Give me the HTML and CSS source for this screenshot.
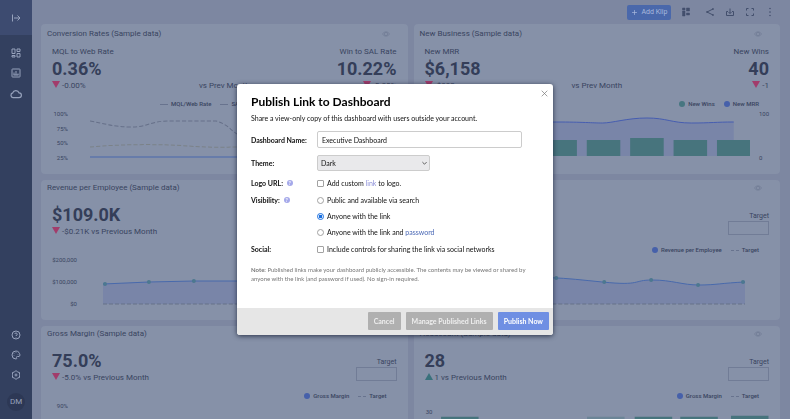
FILE: index.html
```
<!DOCTYPE html>
<html lang="en">
<head>
  <meta charset="UTF-8" />
  <meta name="viewport" content="width=device-width, initial-scale=1.0"/>
  <title>Executive Dashboard</title>
  <link rel="stylesheet" href="styles.css">
</head>
<body>
  <div class="app">
    <nav class="sidebar">
      <button class="expand" aria-label="Expand menu">
        <svg class="icon" viewBox="0 0 20 20"><path d="M3 3v14M6 10h12M13 5l5 5-5 5"/></svg>
      </button>
      <div class="nav-top">
        <a href="#" aria-label="Dashboards"><svg class="icon" viewBox="0 0 20 20"><path d="M2 2h6v9H2zM12 2h6v5h-6zM2 15h6v3H2zM12 11h6v7h-6z"/></svg></a>
        <a href="#" aria-label="Reports"><svg class="icon" viewBox="0 0 20 20"><rect x="2" y="2" width="16" height="16" rx="1"/><path d="M6 14v-5M10 14V6M14 14v-3M5 14h10"/></svg></a>
        <a href="#" aria-label="Data sources"><svg class="icon cloud" viewBox="0 0 20 20"><path d="M5 16a4 4 0 0 1-.5-7.800A5.500 5.500 0 0 1 15 8a4 4 0 0 1 0 8z"/></svg></a>
      </div>
      <div class="nav-bottom">
        <a href="#" aria-label="Help"><svg class="icon" viewBox="0 0 20 20"><circle cx="10" cy="10" r="8"/><path d="M7.500 8a2.500 2.500 0 1 1 2.500 3v1M10 14v1"/></svg></a>
        <a href="#" aria-label="Appearance"><svg class="icon" viewBox="0 0 20 20"><path d="M10 2a8 8 0 1 0 0 16c2 0 1.500-2 1-3s0-2 2-2h3c3-1 2-5 0-8a8 8 0 0 0-6-3z"/><path d="M6 11v1M6 7v1M10 5v1M14 8v1"/></svg></a>
        <a href="#" aria-label="Settings"><svg class="icon" viewBox="0 0 20 20"><path d="M10 1l3 3 4 1v4l1 1-1 1v4l-4 1-3 3-3-3-4-1v-4l-1-1 1-1V5l4-1z"/><circle cx="10" cy="10" r="2"/></svg></a>
        <button class="avatar">DM</button>
      </div>
    </nav>

    <main class="main">
      <div class="toolbar">
        <button class="add"><svg class="icon" viewBox="0 0 20 20"><path d="M10 3v14M3 10h14"/></svg>Add Klip</button>
        <button class="layout" aria-label="Layout"><svg class="icon solid" viewBox="0 0 20 20"><path d="M3 2h5v4H3zM3 8h5v10H3zM11 2h6v6h-6zM11 12h6v4h-6z"/></svg></button>
        <button aria-label="Share"><svg class="icon" viewBox="0 0 20 20"><path d="M16 4L4 10l12 6"/><circle cx="16" cy="4" r="1"/><circle cx="4" cy="10" r="1"/><circle cx="16" cy="16" r="1"/></svg></button>
        <button aria-label="Download"><svg class="icon" viewBox="0 0 20 20"><path d="M6 9H3v8h14V9h-3M10 3v10M7 10l3 3 3-3"/></svg></button>
        <button aria-label="Full screen"><svg class="icon" viewBox="0 0 20 20"><path d="M7 3H3v4M13 3h4v4M7 17H3v-4M13 17h4v-4"/></svg></button>
        <button aria-label="More"><svg class="icon solid" viewBox="0 0 20 20"><circle cx="10" cy="3" r="1"/><circle cx="10" cy="10" r="1"/><circle cx="10" cy="17" r="1"/></svg></button>
      </div>

      <div class="grid">
        <section class="card">
          <header><h2>Conversion Rates (Sample data)</h2><svg class="eye" viewBox="0 0 20 20"><path d="M1 10q9-11 18 0q-9 11-18 0"/><circle cx="10" cy="10" r="4"/></svg></header>
          <div class="kpis">
            <div class="kpi">
              <h3>MQL to Web Rate</h3>
              <div class="value">0.36%</div>
              <div class="delta"><span class="down"></span>-0.00%</div>
            </div>
            <div class="delta">vs Prev Month</div>
            <div class="kpi right">
              <h3>Win to SAL Rate</h3>
              <div class="value">10.22%</div>
              <div class="delta"><span class="down"></span>-0.30%</div>
            </div>
          </div>
          <div class="legend start">
            <span><i class="line"></i>MQL/Web Rate</span>
            <span><i class="line"></i>SAL Rate</span>
          </div>
          <div class="chart">
            <div class="axis percent"><span>100%</span><span>75%</span><span>50%</span><span>25%</span></div>
            <svg class="plot" viewBox="0 0 296 54" preserveAspectRatio="none">
              <path class="dash" d="M0 12C15 15 25 18 40 18S60 12 75 12H122C135 16 135 22 146 27"/>
              <path class="dash gold" d="M0 38C30 35 70 35 95 37S130 38 146 38"/>
              <path class="blue" d="M0 48H296"/>
            </svg>
          </div>
        </section>

        <section class="card">
          <header><h2>New Business (Sample data)</h2><svg class="eye" viewBox="0 0 20 20"><path d="M1 10q9-11 18 0q-9 11-18 0"/><circle cx="10" cy="10" r="4"/></svg></header>
          <div class="kpis">
            <div class="kpi">
              <h3>New MRR</h3>
              <div class="value">$6,158</div>
              <div class="delta"><span class="down"></span>-$882</div>
            </div>
            <div class="delta">vs Prev Month</div>
            <div class="kpi right">
              <h3>New Wins</h3>
              <div class="value">40</div>
              <div class="delta"><span class="down"></span>-1</div>
            </div>
          </div>
          <div class="legend">
            <span><i class="dot green"></i>New Wins</span>
            <span><i class="dot"></i>New MRR</span>
          </div>
          <div class="chart">
            <svg class="plot" viewBox="0 0 330 54" preserveAspectRatio="none">
              <path class="area" d="M20 14L133 13C160 13 170 14 180 14S205 9 225 9S250 14 270 14S295 13 313 13V47H20z"/>
              <path class="violet" d="M20 14L133 13C160 13 170 14 180 14S205 9 225 9S250 14 270 14S295 13 313 13"/>
              <path class="bars" d="M120 31h34v16h-34zM164 31h34v16h-34zM208 29h34v18h-34zM252 31h34v16h-34zM296 31h34v16h-34z"/>
            </svg>
            <div class="axis after"><span>100</span><span>0</span></div>
          </div>
        </section>

        <section class="card wide">
          <header><h2>Revenue per Employee (Sample data)</h2><svg class="eye" viewBox="0 0 20 20"><path d="M1 10q9-11 18 0q-9 11-18 0"/><circle cx="10" cy="10" r="4"/></svg></header>
          <div class="kpis">
            <div class="kpi">
              <div class="value">$109.0K</div>
              <div class="delta"><span class="down"></span>-$0.21K vs Previous Month</div>
            </div>
            <div class="target"><label for="t1">Target</label><input id="t1" type="text"></div>
          </div>
          <div class="legend">
            <span><i class="dot"></i>Revenue per Employee</span>
            <span><i class="line short"></i>Target</span>
          </div>
          <div class="chart">
            <div class="axis money"><span>$200,000</span><span>$100,000</span><span>$0</span></div>
            <svg class="plot" viewBox="0 0 643 50" preserveAspectRatio="none">
              <path class="area" d="M0 27L46 25L91 24H400C440 18 460 21 500 25S530 23 550 23S580 28 597 28S620 26 643 25V47H0z"/>
              <path class="blue" d="M0 27L46 25L91 24H400C440 18 460 21 500 25S530 23 550 23S580 28 597 28S620 26 643 25"/>
              <path class="dash" d="M0 47H643"/>
              <g class="points"><circle cx="2" cy="27" r="2"/><circle cx="46" cy="25" r="2"/><circle cx="91" cy="24" r="2"/><circle cx="454" cy="21" r="2"/><circle cx="502" cy="25" r="2"/><circle cx="549" cy="23" r="2"/><circle cx="596" cy="28" r="2"/><circle cx="641" cy="25" r="2"/></g>
            </svg>
          </div>
        </section>

        <section class="card">
          <header><h2>Gross Margin (Sample data)</h2></header>
          <div class="kpis">
            <div class="kpi">
              <div class="value">75.0%</div>
              <div class="delta"><span class="down"></span>-5.0% vs Previous Month</div>
            </div>
            <div class="target"><label for="t2">Target</label><input id="t2" type="text"></div>
          </div>
          <div class="legend">
            <span><i class="dot"></i>Gross Margin</span>
            <span><i class="line short"></i>Target</span>
          </div>
          <div class="chart">
            <div class="axis percent"><span>90%</span></div>
          </div>
        </section>

        <section class="card">
          <header><h2>Headcount (Sample data)</h2><svg class="eye" viewBox="0 0 20 20"><path d="M1 10q9-11 18 0q-9 11-18 0"/><circle cx="10" cy="10" r="4"/></svg></header>
          <div class="kpis">
            <div class="kpi">
              <div class="value">28</div>
              <div class="delta"><span class="up"></span>1 vs Previous Month</div>
            </div>
            <div class="target"><label for="t3">Target</label><input id="t3" type="text"></div>
          </div>
          <div class="legend">
            <span><i class="dot"></i>Gross Margin</span>
            <span><i class="line short"></i>Target</span>
          </div>
          <div class="chart low">
            <div class="axis count"><span>30</span></div>
            <svg class="plot" viewBox="0 0 328 50" preserveAspectRatio="none">
              <path class="bars" d="M4 9h37v41H4zM195 9h37v41h-37zM240 9h37v41h-37zM290 8h37v42h-37z"/>
              <path class="bars faint" d="M148 9h37v41h-37z"/>
            </svg>
          </div>
        </section>
      </div>
    </main>
  </div>

  <div class="overlay">
    <form class="modal" role="dialog" aria-labelledby="modal-title">
      <button type="button" class="close" aria-label="Close"><svg viewBox="0 0 10 10"><path d="M1 1l8 8M9 1l-8 8"/></svg></button>
      <div class="modal-body">
        <h1 id="modal-title">Publish Link to Dashboard</h1>
        <p class="intro">Share a view-only copy of this dashboard with users outside your account.</p>

        <div class="fields">
          <label class="name" for="dashboard-name">Dashboard Name:</label>
          <input class="text" id="dashboard-name" type="text" value="Executive Dashboard">

          <label class="name" for="theme">Theme:</label>
          <div class="select">
            <select id="theme"><option>Dark</option><option>Light</option></select>
            <svg viewBox="0 0 10 10"><path d="M2 3l3 3 3-3"/></svg>
          </div>

          <div class="name">Logo URL: <span class="help">?</span></div>
          <label class="option"><input type="checkbox"><span>Add custom <a class="pale" href="#">link</a> to logo.</span></label>

          <div class="name">Visibility: <span class="help">?</span></div>
          <div class="options">
            <label class="option"><input type="radio" name="visibility"><span>Public and available via search</span></label>
            <label class="option"><input type="radio" name="visibility" checked><span>Anyone with the link</span></label>
            <label class="option"><input type="radio" name="visibility"><span>Anyone with the link and <a href="#">password</a></span></label>
          </div>

          <div class="name">Social:</div>
          <label class="option"><input type="checkbox"><span>Include controls for sharing the link via social networks</span></label>
        </div>

        <p class="note"><b>Note:</b> Published links make your dashboard publicly accessible. The contents may be viewed or shared by anyone with the link (and password if used). No sign-in required.</p>
      </div>
      <footer class="modal-footer">
        <button type="button">Cancel</button>
        <button type="button">Manage Published Links</button>
        <button type="submit" class="primary">Publish Now</button>
      </footer>
    </form>
  </div>
</body>
</html>
```
FILE: styles.css
```
* {
  box-sizing: border-box;
}

body {
  margin: 0;
  font-family: Roboto, "Open Sans", sans-serif;
  font-size: 7px;
  line-height: 10px;
  color: #39445f;
  background: #7d87a1;
}

h1, h2, h3, p {
  margin: 0;
  font-weight: 400;
}

button, input, select {
  font: inherit;
  color: inherit;
  margin: 0;
}

button {
  border: none;
  padding: 0;
  background: none;
  cursor: pointer;
}

a {
  color: #4a68b5;
  text-decoration: none;
}

.app {
  display: flex;
  height: 100vh;
  overflow: hidden;
}

.icon {
  display: block;
  width: 10px;
  height: 10px;
  fill: none;
  stroke: currentColor;
  stroke-width: 2;
}

.solid {
  fill: currentColor;
  stroke-width: 1;
}

/* sidebar */
.sidebar {
  width: 32px;
  flex-shrink: 0;
  display: flex;
  flex-direction: column;
  color: #97a2bc;
  background: #33405f;
}

.sidebar a {
  color: inherit;
}

.cloud {
  width: 12px;
  height: 12px;
}

.expand {
  height: 35px;
  display: flex;
  justify-content: center;
  align-items: center;
  background: #3d4b70;
}

.nav-top, .nav-bottom {
  display: flex;
  flex-direction: column;
  align-items: center;
  gap: 10px;
  padding-top: 13px;
}

.nav-bottom {
  margin-top: auto;
  padding-bottom: 8px;
}

.avatar {
  width: 18px;
  height: 18px;
  margin-top: 3px;
  border-radius: 50%;
  font-size: 8px;
  background: #2d3855;
}

/* dashboard */
.main {
  flex: 1;
  min-width: 0;
  padding: 0 10px 0 9px;
}

.toolbar {
  height: 24px;
  display: flex;
  justify-content: flex-end;
  align-items: center;
  gap: 10px;
  padding-right: 5px;
  color: #434f6c;
}

.layout {
  margin-right: 4px;
}

.add {
  display: flex;
  align-items: center;
  justify-content: center;
  gap: 4px;
  width: 44px;
  height: 15px;
  border-radius: 2px;
  color: #a9b9dd;
  background: #4a68ab;
}

.add .icon {
  width: 7px;
  height: 7px;
}

.grid {
  display: grid;
  grid-template-columns: 1fr 1fr;
  gap: 6px;
}

.card {
  min-width: 0;
  height: 140px;
  padding: 2px 11px 0;
  border-radius: 4px;
  background: #8691a8;
}

.wide {
  grid-column: span 2;
}

.card header {
  display: flex;
  justify-content: space-between;
  margin: 0 7px 0 -5px;
}

h2 {
  font-size: 8px;
  line-height: 12px;
}

.eye {
  width: 8px;
  height: 12px;
  fill: none;
  stroke: #717c96;
  stroke-width: 2;
}

.kpis {
  display: flex;
  justify-content: space-between;
  align-items: flex-end;
  margin-top: 10px;
}

/* the two cards with a pair of figures */
.card:nth-child(-n+2) {
  height: 150px;
  padding-top: 4px;
}

.card:nth-child(-n+2) .kpis {
  margin-top: 6px;
}

.kpi {
  flex: 1;
}

.kpi.right {
  text-align: right;
}

h3 {
  font-size: 8px;
  line-height: 12px;
}

.value {
  font-size: 18px;
  line-height: 22px;
  font-weight: 700;
  color: #343e59;
}

.delta {
  font-size: 8px;
  line-height: 12px;
}

.down, .up {
  display: inline-block;
  margin-right: 2px;
  border: 4px solid transparent;
  border-bottom: 0;
  border-top: 7px solid #a23c6b;
}

.up {
  border-top: 0;
  border-bottom: 7px solid #39717c;
}

.target {
  width: 41px;
  padding-bottom: 3px;
  text-align: right;
}

.target label {
  display: block;
}

.target input {
  display: block;
  width: 100%;
  height: 14px;
  border: 1px solid #717c96;
  background: none;
}

.legend {
  display: flex;
  justify-content: flex-end;
  gap: 9px;
  margin-top: 7px;
  padding-right: 10px;
  font-size: 6px;
  font-weight: 500;
}

.legend.start {
  justify-content: flex-start;
  padding-left: 108px;
}

.legend span {
  display: flex;
  align-items: center;
  gap: 3px;
}

.dot {
  width: 6px;
  height: 6px;
  border-radius: 50%;
  background: #4660aa;
}

.dot.green {
  background: #477681;
}

.line {
  width: 8px;
  border-top: 1px solid #68738e;
}

.line.short {
  border-top-style: dashed;
}

.chart {
  display: flex;
  font-size: 6px;
}

.axis {
  display: flex;
  flex-direction: column;
  justify-content: space-between;
  text-align: right;
}

.percent {
  width: 16px;
  margin-right: 22px;
}

.money {
  width: 25px;
  margin-right: 26px;
}

.count {
  width: 8px;
  margin-right: 4px;
}

.after {
  width: 19px;
  padding-left: 9px;
  text-align: left;
}

.plot {
  flex: 1;
  min-width: 0;
  height: 54px;
  fill: none;
}

.card:nth-child(-n+3) .axis {
  height: 54px;
}

.wide .plot {
  height: 50px;
  margin: 2px 24px 0 0;
}

.low {
  padding-top: 6px;
}

.dash {
  stroke: #667089;
  stroke-dasharray: 4 2;
}

.gold {
  stroke: #7b8288;
}

.blue {
  stroke: #4869ac;
}

.violet {
  stroke: #465db0;
}

.area {
  fill: #7985a8;
}

.bars {
  fill: #47747d;
}

.faint {
  opacity: 0.4;
}

.points {
  fill: #4c7890;
}

/* publish dialog */
.overlay {
  position: fixed;
  inset: 0;
  display: flex;
  justify-content: center;
  align-items: center;
}

.modal {
  position: relative;
  width: 316px;
  max-width: 90%;
  border-radius: 3px;
  overflow: hidden;
  font-family: Lato, "Open Sans", sans-serif;
  color: #111;
  background: #fff;
  box-shadow: 0 1px 5px rgba(20, 28, 50, 0.8);
}

.close {
  position: absolute;
  top: 5px;
  right: 4px;
  padding: 1px;
}

.close svg, .select svg {
  display: block;
  width: 7px;
  height: 7px;
  fill: none;
  stroke: #777;
}

.modal-body {
  padding: 11px 14px 25px;
}

h1 {
  font-size: 12px;
  line-height: 14px;
  font-weight: 700;
  color: #000;
}

.intro {
  margin: 4px 0 8px;
}

.fields {
  display: grid;
  grid-template-columns: 66px 1fr;
  row-gap: 7px;
}

.name {
  font-weight: 700;
  align-self: center;
}

div.name {
  align-self: start;
}

.help {
  display: inline-block;
  width: 6px;
  height: 6px;
  margin-left: 2px;
  border-radius: 50%;
  font-size: 5px;
  line-height: 6px;
  text-align: center;
  vertical-align: 1px;
  color: #fff;
  background: #a5a9ea;
}

.text {
  width: 205px;
  max-width: 100%;
  height: 17px;
  padding: 0 4px;
  border: 1px solid #ccc;
  border-radius: 2px;
}

.select {
  position: relative;
  width: 113px;
}

.select select {
  display: block;
  width: 100%;
  height: 16px;
  padding: 0 3px;
  appearance: none;
  border: 1px solid #ccc;
  border-radius: 2px;
  background: #e9e9eb;
}

.select svg {
  position: absolute;
  top: 5px;
  right: 2px;
  stroke: #222;
}

.options {
  display: flex;
  flex-direction: column;
  gap: 6px;
}

.option {
  display: flex;
  align-items: center;
  gap: 3px;
}

.option input {
  appearance: none;
  width: 7px;
  height: 7px;
  border: 1px solid #a2a2a2;
  border-radius: 1px;
  background: #fff;
}

.option input[type="radio"] {
  border-radius: 50%;
}

.option input[type="radio"]:checked {
  border-color: #1a6fe0;
  background: radial-gradient(#1a6fe0 40%, #fff 60%);
}

.pale {
  color: #8c8fd8;
}

.note {
  margin-top: 11px;
  font-size: 6px;
  line-height: 9px;
  color: #777;
}

.modal-footer {
  display: flex;
  justify-content: flex-end;
  gap: 5px;
  padding: 4px 4px 5px;
  background: #e6e6e6;
}

.modal-footer button {
  height: 18px;
  padding: 0 6px;
  border-radius: 1px;
  font-weight: 700;
  color: #eee;
  background: #b0b0b0;
}

.modal-footer .primary {
  color: #fff;
  background: #6f8fe3;
}
```
